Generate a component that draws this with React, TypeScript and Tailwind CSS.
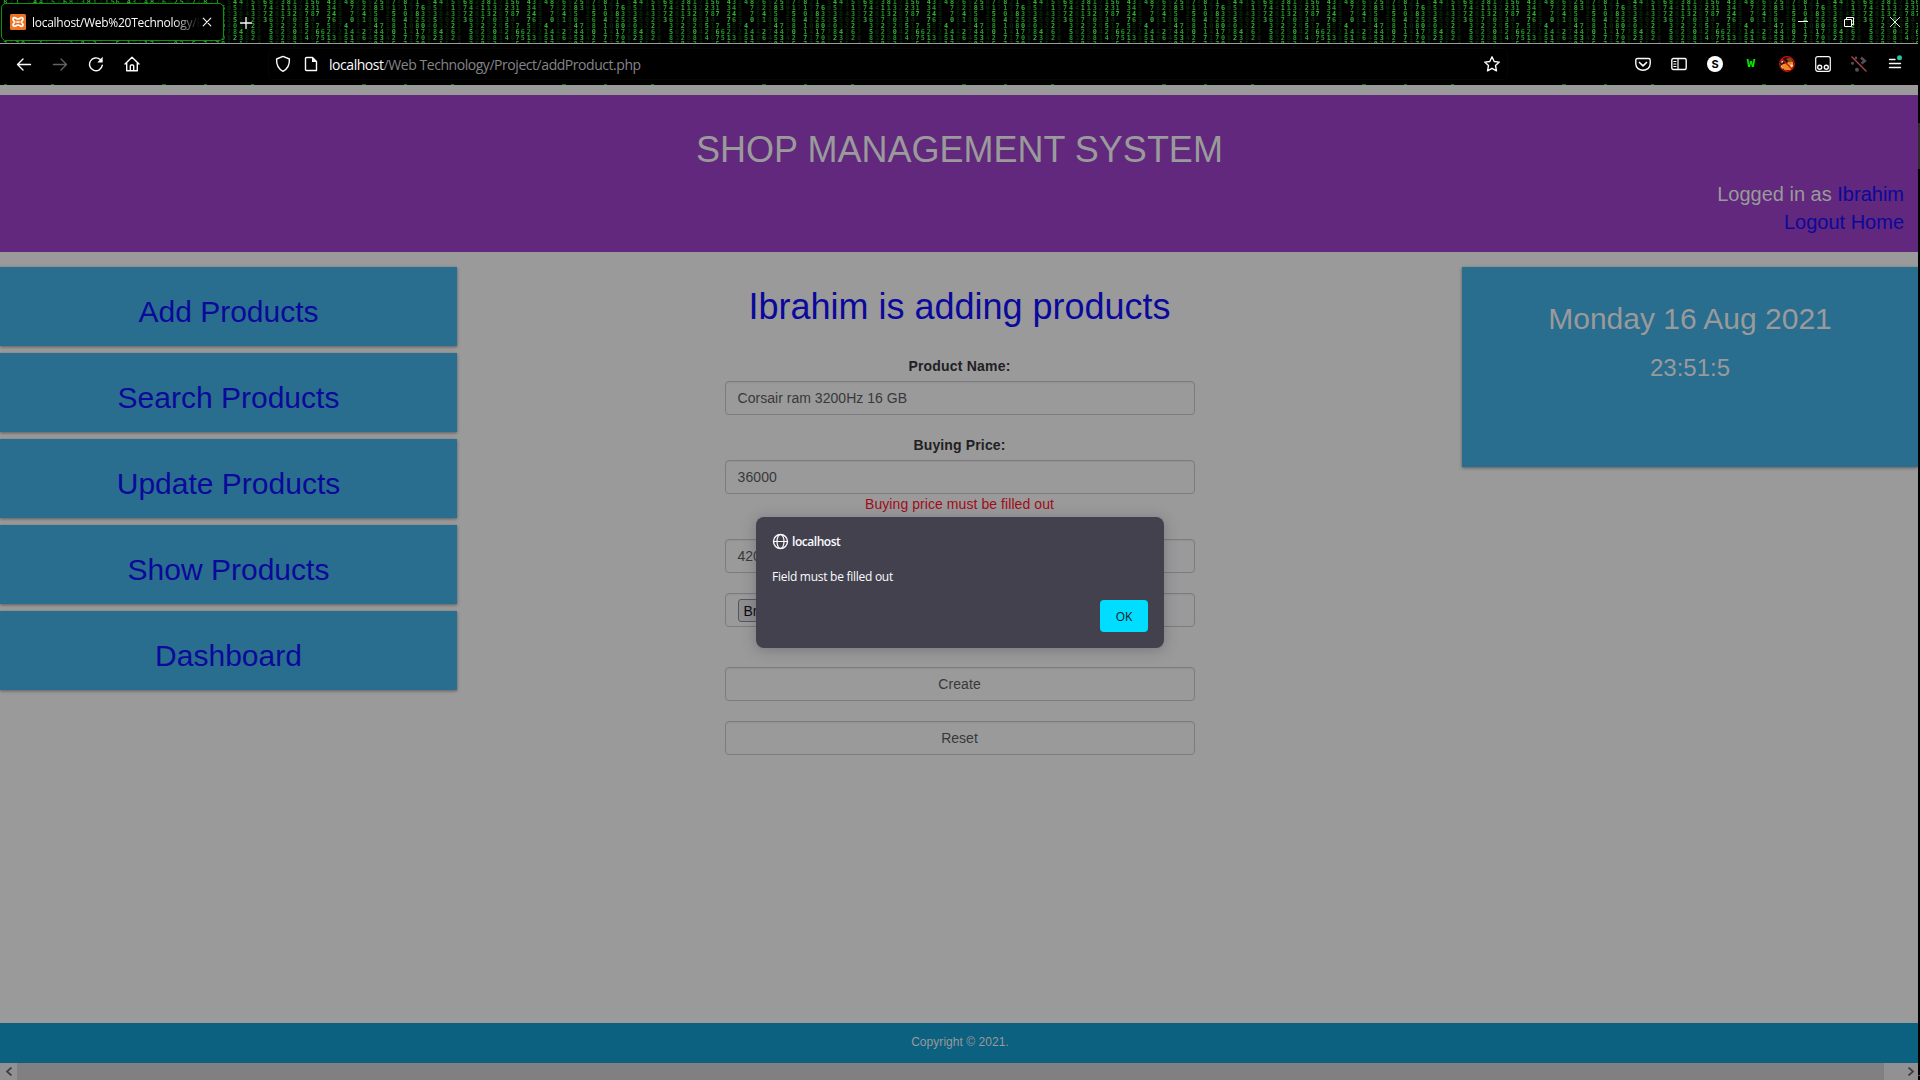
import React from "react";

/* Digital rain: one 200px wide tile, columns given as x, digits per row */
const rows = [4, 10, 16, 22, 28, 34, 40, 46];
const columns: [number, string][] = [
  [5.3, "81041177"], [17.3, "17828177"], [23, " 6350700"], [35, "4535082 "],
  [41, "4    431"], [53, "5132262 "], [65, "6773    "], [71, "84263582"],
  [82.7, "31172228"], [88.7, "813     "], [94.7, "13202082"], [106.7, "1273524 "],
  [112.7, "538     "], [117.6, "617 7675"], [122.7, "     65 "], [128.7, "43275211"],
  [134, "3446  3 "], [146, "4   4151"], [152, "8770 417"], [164, "6241 26 "],
  [175.7, "28504450"], [181.7, "53  7432"], [193.7, "71568025"],
];
const faint: [number, string][] = [
  [11.3, "27350417"], [29, "50324781"], [41, " 2853   "], [47, "17402385"], [59, "83152704"],
  [77, "24817035"], [88.7, "   27581"], [100.7, "72850413"], [112.7, "   41502"],
  [134, "    52 7"], [140, "15837204"], [158, "28517403"], [170, "51382740"], [187.7, "80251746"], [199.5, "47"],
];

function MatrixRain() {
  return (
    <svg className="absolute inset-0 h-full w-full" aria-hidden="true">
      <defs>
        <pattern id="rain" width="200" height="44" patternUnits="userSpaceOnUse">
          <g fontFamily="'DejaVu Sans Mono', monospace" fontSize="6.8" fontWeight="700" textAnchor="middle">
            {faint.map(([x, s], i) =>
              s.split("").map((d, r) => (
                <text key={`f${i}-${r}`} x={x} y={rows[r]} fill="#0a260a">{d}</text>
              ))
            )}
            {columns.map(([x, s], i) =>
              s.split("").map((d, r) => (
                <text key={`c${i}-${r}`} x={x} y={rows[r]} fill={(i + r) % 3 === 0 ? "#33ad35" : "#1f9425"}>{d}</text>
              ))
            )}
          </g>
        </pattern>
      </defs>
      <rect width="100%" height="100%" fill="url(#rain)" />
    </svg>
  );
}

/* Tips of the digits that show below the toolbar */
function RainTips() {
  return (
    <svg className="block h-px w-full" aria-hidden="true">
      <defs>
        <pattern id="tips" width="200" height="1" patternUnits="userSpaceOnUse">
          <path d="M4 0h3v1H4zM51 0h3v1h-3zM162 0h4v1h-4z" fill="#0f6a12" />
        </pattern>
      </defs>
      <rect width="100%" height="1" fill="url(#tips)" />
    </svg>
  );
}

const ui = "font-['Open_Sans','Noto_Sans',sans-serif]";

function Tool({ children }: { children: React.ReactNode }) {
  return <div className="flex h-10 w-9 shrink-0 items-center justify-center">{children}</div>;
}

const line = { fill: "none", stroke: "#fbfbfe", strokeWidth: 1.4, strokeLinecap: "round", strokeLinejoin: "round" } as const;

function TabStrip() {
  return (
    <div className="relative h-[43px] overflow-hidden bg-black">
      <MatrixRain />
      <div className="relative flex h-full items-start pt-[3px] pl-px">
        <div className="flex h-[38px] w-[223px] items-center rounded-[5px] border border-[#0c930c] bg-black pl-2">
          <svg width="16" height="16" viewBox="0 0 16 16" className="shrink-0">
            <rect width="16" height="16" rx="1.500" fill="#ee7422" />
            <path d="M4.500 3.700C3 3.700 2.600 5.200 3.400 6.300L4.700 8 3.400 9.700c-.8 1.100-.4 2.600 1.100 2.600 1.500 0 1.700-1.300 3.500-1.300s2 1.300 3.500 1.300c1.500 0 1.900-1.500 1.100-2.600L11.300 8l1.300-1.700c.8-1.100.4-2.600-1.100-2.600C10 3.700 9.800 5 8 5S6 3.700 4.500 3.700Z" fill="none" stroke="#fff" strokeWidth="1.700" />
            <path d="M6.300 8h3.400" stroke="#fff" strokeWidth="1.600" />
          </svg>
          <div className={`${ui} mt-0.5 ml-1.5 w-[168px] overflow-hidden text-[12px] tracking-[-0.27px] whitespace-nowrap text-[#fbfbfe] [mask-image:linear-gradient(to_right,black_84%,transparent)]`}>
            localhost/Web%20Technology/P
          </div>
          <svg width="10" height="10" viewBox="0 0 10 10" className="ml-0.5 shrink-0"><path d="M1.200 1.200 8.800 8.800M8.800 1.200 1.200 8.800" {...line} strokeWidth="1.100" /></svg>
        </div>
        <svg width="12" height="12" viewBox="0 0 12 12" className="mt-[14px] ml-4"><path d="M6 .5v11M.5 6h11" {...line} strokeWidth="1.300" /></svg>
        <div className="ml-auto flex h-9 items-center pt-0.5">
          <div className="flex w-[46px] justify-center"><svg width="10" height="10" viewBox="0 0 10 10"><path d="M0 4.500h10" stroke="#fff" /></svg></div>
          <div className="flex w-[46px] justify-center"><svg width="10" height="10" viewBox="0 0 10 10" fill="none" stroke="#fff"><path d="M.5 2.500h7v7h-7zM2.500 2.500v-2h7v7h-2" /></svg></div>
          <div className="flex w-[46px] justify-center"><svg width="10" height="10" viewBox="0 0 10 10"><path d="m0 0 10 10M10 0 0 10" stroke="#fff" strokeWidth=".9" /></svg></div>
        </div>
      </div>
    </div>
  );
}

function Toolbar() {
  return (
    <div className="flex h-[41px] items-center border-t border-[#9a9a9b] bg-black pr-[5px] pl-1.5">
      <Tool><svg width="16" height="16" viewBox="0 0 16 16"><path d="M14.500 8.500H1.500M7 3 1.500 8.500 7 14" {...line} /></svg></Tool>
      <Tool><svg width="16" height="16" viewBox="0 0 16 16"><path d="M1.500 8.500h13M9 3l5.500 5.500L9 14" {...line} stroke="#626264" /></svg></Tool>
      <Tool><svg width="16" height="16" viewBox="0 0 16 16"><path d="M14.300 9.200A6.400 6.400 0 1 1 12.300 3.600" {...line} /><path d="M14.700.8v5.700H9.300Z" fill="#fbfbfe" /></svg></Tool>
      <Tool><svg width="16" height="16" viewBox="0 0 16 16"><path d="M1 8 8 1.200 15 8M2.700 6.800v7.900h10.600V6.800M6.300 14.500V10q0-1 1-1h1.400q1 0 1 1v4.500" {...line} /></svg></Tool>
      <div className="ml-[118px] flex h-8 w-[1240px] items-center rounded border border-[#060606] pl-[6px]">
        <svg width="16" height="18" viewBox="0 0 16 18"><path d="M8 1.400 14.400 4c.3 5.500-1 9.500-6.400 12.300C2.600 13.500 1.300 9.500 1.600 4Z" {...line} /></svg>
        <svg width="14" height="16" viewBox="0 0 14 16" className="ml-[13px]"><path d="M2.500 1.500h6L12.500 5.500v9h-10q-1 0-1-1v-11q0-1 1-1Z" {...line} /><path d="M8 1v5h5Z" fill="#fbfbfe" /></svg>
        <div className={`${ui} mt-px ml-[11px] text-[14px] tracking-[-0.45px] whitespace-nowrap text-[#858588]`}><span className="text-[#fbfbfe]">localhost</span>/Web Technology/Project/addProduct.php</div>
        <svg width="18" height="18" viewBox="0 0 18 18" className="mr-1.5 ml-auto"><path d="m9 1.800 2.200 4.700 5.100.6-3.800 3.500 1 5.200L9 13.300l-4.500 2.500 1-5.200L1.700 7.100l5.100-.6Z" {...line} /></svg>
      </div>
      <div className="ml-auto flex">
        <Tool><svg width="16" height="16" viewBox="0 0 16 16"><path d="M2.500 2.500h11q1.700 0 1.700 1.700v3.500c0 8.700-14.400 8.700-14.400 0V4.200Q.8 2.500 2.500 2.500Z" {...line} /><path d="M4.500 6.500 8 9.800l3.500-3.300" {...line} strokeWidth="1.700" /></svg></Tool>
        <Tool><svg width="16" height="14" viewBox="0 0 16 14"><rect x=".8" y="1.500" width="14.400" height="11" rx="1.500" {...line} /><path d="M7 1.500v11M2.800 4.500H5M2.800 7H5M2.800 9.500H5" {...line} strokeWidth="1.200" /></svg></Tool>
        <Tool><div className="flex size-4 items-center justify-center rounded-full bg-white font-['Inter',sans-serif] text-[11px] leading-4 font-bold text-black">S</div></Tool>
        <Tool><span className="-mt-1 font-['DejaVu_Sans_Mono',monospace] text-[14px] leading-4 font-bold text-[#00f000]">w</span></Tool>
        <Tool><svg width="16" height="16" viewBox="0 0 16 16"><circle cx="8" cy="8" r="6.500" fill="#2a0d08" /><path d="M2 10 4 8l4-1 3-3 3 2 .5 4L12 14l-6 .5Z" fill="#f08a22" /><path d="m7 3 4-1.500 3 3-3 2Z" fill="#7d4a2a" /><path d="m1.500 8 3 5-2-1ZM11.500 8.500l3 .5-3 3ZM2.500 4l2 1.500-2 2Z" fill="#f7e2cc" /><circle cx="8" cy="8" r="7.300" fill="none" stroke="#d60f12" strokeWidth="1.200" /><path d="m3 3 10 10" stroke="#d60f12" strokeWidth="1.200" /></svg></Tool>
        <Tool><svg width="16" height="16" viewBox="0 0 16 16"><rect x=".7" y=".7" width="14.600" height="14.600" rx="2" {...line} strokeWidth="1.200" /><circle cx="4.700" cy="11.300" r="2" {...line} /><circle cx="11.300" cy="11.300" r="2" {...line} /></svg></Tool>
        <Tool><svg width="16" height="16" viewBox="0 0 16 16"><g fill="#515155"><circle cx="5" cy="2" r="1.400" /><circle cx="1.500" cy="7.300" r="1.500" /><circle cx="6" cy="13.800" r="2" /></g><path d="M10 1.500 13.800 5 10.500 7.500" fill="none" stroke="#515155" strokeWidth="2.500" /><path d="m.5.5 15 15" stroke="#b8434c" strokeWidth="1.300" /></svg></Tool>
        <Tool><svg width="16" height="20" viewBox="0 0 16 20"><path d="M2.500 5.500H8M2.500 9.500h11M2.500 13.500h11" {...line} /><circle cx="12.500" cy="3.700" r="2.500" fill="#2ac3a2" /></svg></Tool>
      </div>
    </div>
  );
}

const field = "flex h-[34px] w-[470px] items-center rounded-[4px] border border-[#7c7c7e] px-3 text-[14px] text-[#38383a] shadow-[inset_0_1px_1px_rgba(0,0,0,0.05)]";
const links = ["Add Products", "Search Products", "Update Products", "Show Products", "Dashboard"];

export default function App() {
  return (
    <div className="flex h-[1080px] w-[1920px] overflow-hidden bg-black font-['Liberation_Sans',Arial,sans-serif]">
      <div className="relative flex w-[1918px] flex-col">
        <TabStrip />
        <Toolbar />
        <RainTips />
        <main className="flex h-[938px] flex-col bg-[#9a9a9b] pt-2.5">
          <header className="h-[157px] bg-[#61287d] pt-[35px] text-[#9a9a9b]">
            <h1 className="pl-px text-center text-[36px] leading-[40px]">SHOP MANAGEMENT SYSTEM</h1>
            <div className="pt-[10px] pr-[14px] text-right text-[20px] leading-[28px]">
              <p>Logged in as <a className="text-[#0b099b]">Ibrahim</a></p>
              <p className="text-[#0b099b]">Logout Home</p>
            </div>
          </header>
          <div className="flex justify-between pt-[15px]">
            <nav className="flex w-[457px] flex-col gap-[7px]">
              {links.map((l) => (
                <a key={l} className="block h-[79px] bg-[#296e8e] pt-[28px] text-center text-[30px] leading-[33px] text-[#0b099b] shadow-[0_1px_3px_rgba(0,0,0,0.4)]">{l}</a>
              ))}
            </nav>
            <section className="flex w-[470px] flex-col items-center pt-5">
              <h2 className="text-[36px] leading-[40px] text-[#0b099b]">Ibrahim is adding products</h2>
              <label className="mt-[29px] text-[14px] leading-5 font-bold tracking-[0.2px] text-[#212123]">Product Name:</label>
              <div className={`${field} mt-[5px] tracking-[0.03px]`}>Corsair ram 3200Hz 16 GB</div>
              <label className="mt-5 text-[14px] leading-5 font-bold tracking-[0.14px] text-[#212123]">Buying Price:</label>
              <div className={`${field} mt-[5px] tracking-[0.1px]`}>36000</div>
              <p className="text-[14px] leading-5 tracking-[0.07px] text-[#a20b18]">Buying price must be filled out</p>
              <div className={`${field} mt-[25px]`}>42000</div>
              <div className={`${field} mt-5`}><span className="rounded-[3px] border border-[#56565e] bg-[#8e8e91] px-[5px] pt-0.5 text-[14px] leading-[19px] text-[#0a0a0c]">Browse...</span></div>
              <button className={`${field} mt-10 justify-center tracking-[0.1px]`}>Create</button>
              <button className={`${field} mt-5 justify-center`}>Reset</button>
            </section>
            <aside className="h-[200px] w-[456px] bg-[#296e8e] pt-[35px] text-center text-[#9a9a9b] shadow-[0_1px_3px_rgba(0,0,0,0.4)]">
              <p className="text-[30px] leading-[33px]">Monday 16 Aug 2021</p>
              <p className="mt-5 text-[24px] leading-[26px]">23:51:5</p>
            </aside>
          </div>
        </main>
        <footer className="h-10 bg-[#0c6080] pt-[10px] pl-0.5 text-center text-[12px] leading-[18px] tracking-[0.05px] text-[#9a9a9b]">Copyright © 2021.</footer>
        <div className="flex h-[17px] bg-[#808082]">
          <div className="flex w-[17px] items-center justify-center bg-[#919193]"><svg width="8" height="9" viewBox="0 0 8 9"><path d="M6.500.5 2 4.500l4.500 4" fill="none" stroke="#414143" strokeWidth="1.800" /></svg></div>
          <div className="ml-auto flex w-[34px] items-center justify-end bg-[#919193] pr-[3px]"><svg width="8" height="9" viewBox="0 0 8 9"><path d="m1.500.5 4.500 4-4.500 4" fill="none" stroke="#414143" strokeWidth="1.800" /></svg></div>
        </div>

        {/* Browser alert */}
        <div className={`${ui} absolute top-[517px] left-[756px] flex h-[131px] w-[408px] flex-col rounded-lg bg-[#42414d] px-4 pt-[17px] text-[12px] text-[#fbfbfe] shadow-[0_2px_14px_rgba(58,57,68,0.35)]`}>
          <div className="flex h-4 items-center gap-[3px] font-semibold tracking-[-0.45px]">
            <svg width="17" height="17" viewBox="0 0 17 17" className="-mt-px"><g {...line} strokeWidth="1.400"><circle cx="8.500" cy="8.500" r="7" /><ellipse cx="8.500" cy="8.500" rx="3.500" ry="7" strokeWidth="1.200" /><path d="M1.500 8.500h14" strokeWidth="1.200" /></g></svg>
            <span>localhost</span>
          </div>
          <p className="mt-[19px] leading-4 tracking-[-0.27px]">Field must be filled out</p>
          <button className="mt-[15px] flex h-8 w-12 items-center justify-center self-end rounded bg-[#00ddff] pt-px text-[#15141a]">OK</button>
        </div>
      </div>
      <div className="flex flex-1 flex-col">
        <div className="mt-[123px] h-[46px] bg-[#2b2b2b]" />
        <div className="mt-auto mb-1 h-px bg-[#565656]" />
      </div>
    </div>
  );
}
